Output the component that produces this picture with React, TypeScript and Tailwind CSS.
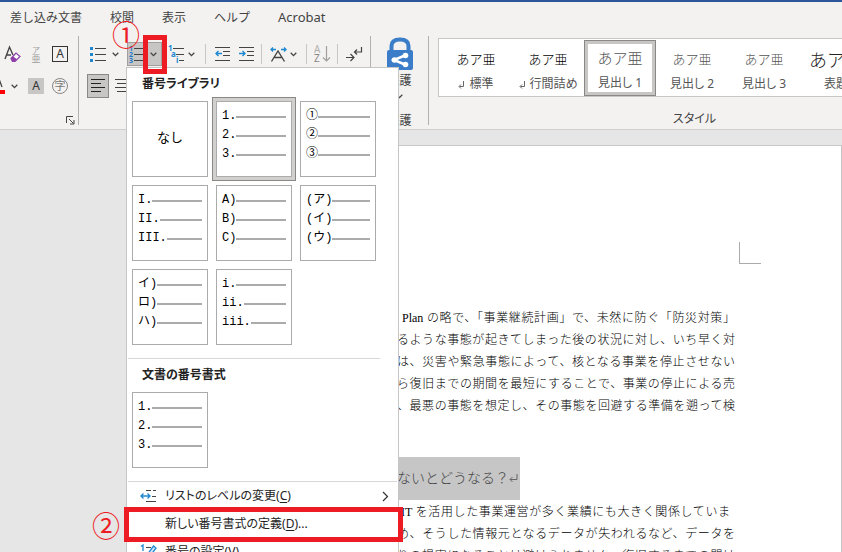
import type { ReactNode } from "react";

const UI = "font-['Noto_Sans','Noto_Sans_CJK_JP',sans-serif] [font-feature-settings:'palt']";
const DOC = "font-['Liberation_Serif','Noto_Sans_CJK_JP',serif] font-light [font-feature-settings:normal]";

const tabs = ["差し込み文書", "校閲", "表示", "ヘルプ"];

function Chevron() {
  return (
    <svg width="7" height="5" viewBox="0 0 7 5" fill="none" stroke="#444" strokeWidth="1.3" aria-hidden="true">
      <path d="M0.7 0.8 3.5 3.6 6.3 0.8" />
    </svg>
  );
}

function Tool({ label, className = "", children }: { label: string; className?: string; children: ReactNode }) {
  return (
    <button type="button" aria-label={label} className={`flex h-6 shrink-0 items-center justify-center ${className}`}>
      {children}
    </button>
  );
}

function Separator() {
  return <span className="h-5 w-px shrink-0 bg-[#c8c6c4]" />;
}

function GroupDivider() {
  return <span className="mt-[1px] h-[89px] w-px shrink-0 bg-[#b3b0ad]" />;
}

function FontGroup() {
  return (
    <section className="flex w-[78px] shrink-0 flex-col" aria-label="フォント">
      <div className="mt-[7px] flex h-6 items-center">
        <Tool label="書式のクリア" className="w-6">
          <svg width="17" height="18" viewBox="0 0 17 18" fill="none" aria-hidden="true">
            <path d="M1 14 5.500 2 9 10M2.500 10H7" stroke="#444" strokeWidth="1.4" />
            <path d="M7 13.500 12 8 16 11.500 11 16.500 8.500 16.500Z" stroke="#8e3fa8" strokeWidth="1.2" fill="#fff" />
            <path d="M7 13.500 9 11.300 13.200 14.500 11 16.500 8.500 16.500Z" fill="#8e3fa8" />
          </svg>
        </Tool>
        <Tool label="ルビ" className="w-6">
          <span className="flex flex-col items-center text-[#a19f9d]">
            <span className="text-[8px] leading-[9px]">ア</span>
            <span className="text-[9px] leading-[9px]">亜</span>
          </span>
        </Tool>
        <Tool label="囲み線" className="w-6">
          <span className="size-4 border border-[#333] text-center text-xs leading-[14px] text-[#333]">A</span>
        </Tool>
      </div>
      <div className="mt-2 flex h-6 items-center">
        <Tool label="フォントの色" className="w-[5px]">
          <svg width="5" height="16" viewBox="0 0 5 16" aria-hidden="true">
            <path d="M-4 10 -1 1 2 9" stroke="#444" strokeWidth="1.3" fill="none" />
            <rect y="12" width="5" height="4" fill="#f00" />
          </svg>
        </Tool>
        <Tool label="フォントの色のオプション" className="w-[19px]">
          <Chevron />
        </Tool>
        <Tool label="文字の網かけ" className="w-6">
          <span className="size-4 bg-[#c8c6c4] text-center text-xs leading-4 text-[#333]">A</span>
        </Tool>
        <Tool label="囲い文字" className="w-6">
          <span className="size-4 rounded-full border border-[#8a8886] text-center text-[11px] leading-[14px] text-[#797775]">
            字
          </span>
        </Tool>
      </div>
      <Tool label="フォントの設定" className="mt-[10px] ml-auto w-4">
        <svg width="9" height="9" viewBox="0 0 9 9" fill="none" stroke="#444" aria-hidden="true">
          <path d="M.5 7V.5H7M3 3 7.5 7.5M8 4V8H4" />
        </svg>
      </Tool>
    </section>
  );
}

function ParagraphGroup() {
  return (
    <section className="flex w-[291px] shrink-0 flex-col pl-2" aria-label="段落">
      <div className="mt-[7px] flex h-6 items-center">
        <Tool label="箇条書き" className="w-[22px]">
          <svg width="16" height="16" viewBox="0 0 16 16" aria-hidden="true">
            <path d="M0 1h3v3H0zM0 7h3v3H0zM0 13h3v3H0z" fill="#1e88d0" />
            <path d="M5 2.500h11M5 8.500h11M5 14.500h11" stroke="#444" />
          </svg>
        </Tool>
        <Tool label="箇条書きのオプション" className="w-[13px]">
          <Chevron />
        </Tool>
        <Tool label="段落番号" className="ml-[5px] w-[18px] border border-r-0 border-[#a19f9d] bg-[#c8c6c4]">
          <svg width="15" height="18" viewBox="0 0 15 18" aria-hidden="true">
            <path d="M5 3.500h10M5 9.500h10M5 15.500h10" stroke="#444" />
            <g fill="#1e78c8" fontSize="7" fontWeight="700" fontFamily="Noto Sans">
              <text x="0" y="6">1</text>
              <text x="0" y="12">2</text>
              <text x="0" y="18">3</text>
            </g>
          </svg>
        </Tool>
        <Tool label="段落番号のオプション" className="w-[17px] border border-l-0 border-[#a19f9d] bg-[#c8c6c4]">
          <Chevron />
        </Tool>
        <Tool label="アウトライン" className="ml-[3px] w-[21px]">
          <svg width="16" height="18" viewBox="0 0 16 18" aria-hidden="true">
            <path d="M5 3.500h11M8 9.500h8M11 15.500h5" stroke="#444" />
            <g fill="#1e88d0" fontSize="8" fontWeight="700" fontFamily="Noto Sans">
              <text x="0" y="6">1</text>
              <text x="3" y="12">a</text>
              <text x="8" y="18">i</text>
            </g>
          </svg>
        </Tool>
        <Tool label="アウトラインのオプション" className="mr-2 w-[11px]">
          <Chevron />
        </Tool>
        <Separator />
        <Tool label="インデントを減らす" className="ml-1 w-6">
          <svg width="15" height="14" viewBox="0 0 15 14" fill="none" aria-hidden="true">
            <path d="M0 .5h15M8 4.500h7M8 8.500h7M0 13.500h15" stroke="#444" />
            <path d="M7 6.500H1M3.500 4 1 6.500 3.500 9" stroke="#1e88d0" strokeWidth="1.4" />
          </svg>
        </Tool>
        <Tool label="インデントを増やす" className="mr-[3px] w-6">
          <svg width="15" height="14" viewBox="0 0 15 14" fill="none" aria-hidden="true">
            <path d="M0 .5h15M8 4.500h7M8 8.500h7M0 13.500h15" stroke="#444" />
            <path d="M0 6.500H6M3.500 4 6 6.500 3.500 9" stroke="#1e88d0" strokeWidth="1.4" />
          </svg>
        </Tool>
        <Separator />
        <Tool label="拡張書式" className="ml-[5px] w-[22px]">
          <svg width="17" height="15" viewBox="0 0 17 15" fill="none" aria-hidden="true">
            <path d="M1.500 14.500 8 4 14.500 14.500M4.500 10.500h7" stroke="#444" strokeWidth="1.4" />
            <path d="M6 2.500H1M3 .5 1 2.500 3 4.500M11 2.500H16M14 .5 16 2.500 14 4.500" stroke="#1e88d0" strokeWidth="1.3" />
          </svg>
        </Tool>
        <Tool label="拡張書式のオプション" className="mr-2 w-[9px]">
          <Chevron />
        </Tool>
        <Separator />
        <Tool label="並べ替え" className="ml-[5px] w-5">
          <svg width="17" height="18" viewBox="0 0 17 18" fill="none" aria-hidden="true">
            <g fontSize="10" fontFamily="Noto Sans">
              <text x="0" y="8" fill="#b3b0ad">A</text>
              <text x="0" y="17" fill="#8a8886">Z</text>
            </g>
            <path d="M12.500 1V16M9 12.500 12.500 16 16 12.500" stroke="#a19f9d" strokeWidth="1.2" />
          </svg>
        </Tool>
        <span className="w-[5px]" />
        <Separator />
        <Tool label="編集記号の表示" className="ml-1 w-6">
          <svg width="17" height="16" viewBox="0 0 17 16" fill="none" stroke="#444" strokeWidth="1.2" aria-hidden="true">
            <path d="M15.500 1V6H8.500M11 3.500 8.500 6 11 8.500M0 11.500H7.500M4.500 8 8 11.500 4.500 15" />
          </svg>
        </Tool>
      </div>
      <div className="mt-2 flex h-6 items-center">
        <Tool label="左揃え" className="w-[22px] border border-[#8a8886] bg-[#c8c6c4]">
          <svg width="15" height="14" viewBox="0 0 15 14" stroke="#222" aria-hidden="true">
            <path d="M0 .5h14M0 4.500h10M0 8.500h14M0 12.500h10" />
          </svg>
        </Tool>
        <Tool label="中央揃え" className="ml-[2px] w-[22px]">
          <svg width="15" height="14" viewBox="0 0 15 14" stroke="#444" aria-hidden="true">
            <path d="M0 .5h15M2 4.500h10M0 8.500h15M2 12.500h10" />
          </svg>
        </Tool>
      </div>
    </section>
  );
}

function ProtectGroup() {
  return (
    <section className="flex w-[57px] shrink-0 flex-col items-center text-xs text-[#444]" aria-label="保護">
      <button type="button" className="mt-[2px] flex flex-col items-center">
        <svg width="28" height="33" viewBox="0 0 28 33" fill="none" aria-hidden="true">
          <path d="M5.500 15V9Q5.500 2.500 14 2.500T22.500 9V15" stroke="#3b7dc8" strokeWidth="4" />
          <rect x="1" y="13" width="26" height="20" rx="2" fill="#3b7dc8" />
          <path d="M20 18 8 23 20 28" stroke="#fff" strokeWidth="2.500" />
          <circle cx="19.500" cy="18.500" r="2.800" fill="#fff" />
          <circle cx="8.500" cy="23" r="2.800" fill="#fff" />
          <circle cx="19.500" cy="27.500" r="2.800" fill="#fff" />
        </svg>
        <span className="mt-px leading-5">保護</span>
        <span className="flex h-[10px] items-center">
          <Chevron />
        </span>
      </button>
      <span className="mt-[10px] leading-5">保護</span>
    </section>
  );
}

const styleItems = [
  { name: "標準", mark: true, sample: "text-[13px] text-black" },
  { name: "行間詰め", mark: true, sample: "text-[13px] text-black" },
  { name: "見出し 1", mark: false, sample: "text-[15px] text-[#555]", selected: true },
  { name: "見出し 2", mark: false, sample: "text-[13px] text-[#555]" },
  { name: "見出し 3", mark: false, sample: "text-[13px] text-[#555]" },
  { name: "表題", mark: false, sample: "text-[18px] text-[#222]" },
];

function StylesGroup() {
  return (
    <section className="flex w-[522px] shrink-0 flex-col pl-[9px]" aria-label="スタイル">
      <div className="mt-[3px] flex h-[60px] items-center border border-[#c8c6c4] bg-white px-px">
        {styleItems.map((s) => (
          <button
            key={s.name}
            type="button"
            className={`flex h-14 w-[72px] shrink-0 flex-col items-center justify-end whitespace-nowrap ${
              s.selected ? "border border-[#8a8886] bg-white ring-3 ring-[#c8c6c4] ring-inset" : ""
            }`}
          >
            <span
              className={`font-['Noto_Sans_CJK_JP',sans-serif] leading-[26px] font-light [font-feature-settings:normal] ${s.sample}`}
            >
              あア亜
            </span>
            <span className={`flex gap-1 text-xs leading-6 text-[#555] ${UI}`}>
              {s.mark && (
                <svg className="mt-2" width="7" height="9" viewBox="0 0 7 9" fill="none" stroke="#666" aria-hidden="true">
                  <path d="M5.500 1V6.500H1.500M3 4.500 1 6.500 3 8.500" />
                </svg>
              )}
              {s.name}
            </span>
          </button>
        ))}
      </div>
      <span className="mt-3 text-center text-xs leading-5 text-[#444]">スタイル</span>
    </section>
  );
}

const library = [
  null,
  ["1.", "2.", "3."],
  ["①", "②", "③"],
  ["I.", "II.", "III."],
  ["A)", "B)", "C)"],
  ["(ア)", "(イ)", "(ウ)"],
  ["イ)", "ロ)", "ハ)"],
  ["i.", "ii.", "iii."],
];

function FormatCell({ labels, selected = false }: { labels: string[] | null; selected?: boolean }) {
  return (
    <button
      type="button"
      className={`size-[84px] border p-[3px] ${selected ? "border-[#8a8886] bg-[#d2d0ce]" : "border-transparent"}`}
    >
      <span className="flex size-full flex-col border border-[#ababab] bg-white px-[5px] pt-[5px] font-['Liberation_Mono','Noto_Sans_CJK_JP',monospace] text-xs leading-[19px] text-black [font-feature-settings:normal]">
        {labels ? (
          labels.map((l) => (
            <span key={l} className="flex items-center whitespace-nowrap">
              {l}
              <span className="h-[2px] flex-1 bg-[#ababab]" />
            </span>
          ))
        ) : (
          <span className="mt-[22px] text-center text-[13px]">なし</span>
        )}
      </span>
    </button>
  );
}

function MenuItem({ icon, label, mnemonic, suffix = "", arrow = false }: {
  icon?: ReactNode;
  label: string;
  mnemonic: string;
  suffix?: string;
  arrow?: boolean;
}) {
  return (
    <button type="button" className="flex h-7 w-full items-center pr-2 pl-3 text-left text-xs text-[#222]">
      <span className="w-[25px] shrink-0">{icon}</span>
      <span className="whitespace-nowrap">
        {label}(<u className="underline-offset-2">{mnemonic}</u>){suffix}
      </span>
      {arrow && (
        <svg className="ml-auto" width="7" height="11" viewBox="0 0 7 11" fill="none" stroke="#333" strokeWidth="1.2" aria-hidden="true">
          <path d="M1 1 5.500 5.500 1 10" />
        </svg>
      )}
    </button>
  );
}

function NumberingMenu() {
  return (
    <div className="absolute top-[67px] left-[126px] w-[273px] border border-[#c6c6c6] bg-white px-px">
      <h2 className="h-[29px] pl-[14px] text-xs leading-[31px] font-bold text-[#222]">番号ライブラリ</h2>
      <div className="grid w-[252px] grid-cols-3">
        {library.map((labels, i) => (
          <FormatCell key={i} labels={labels} selected={i === 1} />
        ))}
      </div>
      <hr className="mt-[9px] w-[252px] border-[#d8d8d8]" />
      <h2 className="h-[29px] pl-[14px] text-xs leading-[31px] font-bold text-[#222]">文書の番号書式</h2>
      <FormatCell labels={["1.", "2.", "3."]} />
      <hr className="mt-[9px] border-[#d8d8d8]" />
      <MenuItem
        label="リストのレベルの変更"
        mnemonic="C"
        arrow
        icon={
          <svg width="17" height="14" viewBox="0 0 17 14" fill="none" aria-hidden="true">
            <path d="M6 1.500h5M13 1.500h3M12 7.500h4M6 12.500h10" stroke="#444" />
            <path d="M1 7H10M3.500 4.500 1 7 3.500 9.500M7.500 4.500 10 7 7.500 9.500" stroke="#1e88d0" strokeWidth="1.3" />
          </svg>
        }
      />
      <MenuItem label="新しい番号書式の定義" mnemonic="D" suffix="..." />
      <MenuItem
        label="番号の設定"
        mnemonic="V"
        suffix="..."
        icon={
          <svg width="17" height="16" viewBox="0 0 17 16" fill="none" aria-hidden="true">
            <path d="M1 2.500 3 1V7" stroke="#1e88d0" strokeWidth="1.300" />
            <path d="M6 3.500h5M1 14.500h5" stroke="#444" />
            <path d="M7 11 13.500 2 16 4 9.500 13 6.500 14Z" stroke="#1e88d0" strokeWidth="1.300" fill="#cfe6f7" />
          </svg>
        }
      />
    </div>
  );
}

function Line({ className = "", children }: { className?: string; children: ReactNode }) {
  return <span className={`block text-justify whitespace-nowrap [text-align-last:justify] ${className}`}>{children}</span>;
}

function DocumentPage() {
  return (
    <main className="flex-1 overflow-hidden bg-[#e6e6e6] pt-[15px] pl-[160px]">
      <article className={`flex h-full flex-col border border-b-0 border-[#c6c6c6] bg-white pr-[106px] text-xs text-black ${DOC}`}>
        <span className="mt-24 -mr-[26px] size-[22px] shrink-0 self-end border-b border-l border-[#ababab]" />
        <p className="mt-[43px] w-[338px] self-end leading-[22px]">
          <Line className="pl-[5px]">Plan の略で、「事業継続計画」で、未然に防ぐ「防災対策」</Line>
          <Line>るような事態が起きてしまった後の状況に対し、いち早く対</Line>
          <Line>は、災害や緊急事態によって、核となる事業を停止させない</Line>
          <Line>ら復旧までの期間を最短にすることで、事業の停止による売</Line>
          <Line>、最悪の事態を想定し、その事態を回避する準備を遡って検</Line>
        </p>
        <div className="mt-10 w-[338px] self-end">
          <h1 className="flex h-[43px] w-[123px] items-center bg-[#c6c6c6] text-sm font-light whitespace-nowrap text-[#444]">
            ないとどうなる？
            <svg className="shrink-0" width="9" height="9" viewBox="0 0 9 9" fill="none" stroke="#666" aria-hidden="true">
              <path d="M8 0V5.500H1M3.500 3 1 5.500 3.500 8" />
            </svg>
          </h1>
        </div>
        <p className="mt-px w-[338px] self-end leading-[22px]">
          <Line className="pr-[5px] pl-1">IT を活用した事業運営が多く業績にも大きく関係していま</Line>
          <Line>め、そうした情報元となるデータが失われるなど、データを</Line>
          <Line>りの損害になることは避けられません。復旧するまでの間は</Line>
        </p>
      </article>
    </main>
  );
}

export default function App() {
  return (
    <div className={`relative flex h-screen flex-col overflow-hidden bg-[#f3f2f1] ${UI}`}>
      <nav className="flex h-[35px] shrink-0 items-center gap-7 border-t-2 border-[#2b579a] pb-[2px] pl-[10px] text-xs whitespace-nowrap text-[#444] [font-feature-settings:normal]">
        {tabs.map((t) => (
          <button key={t} type="button">
            {t}
          </button>
        ))}
        <button type="button" className="text-[13px]">
          Acrobat
        </button>
      </nav>
      <div className="flex h-[95px] shrink-0 overflow-hidden border-b border-[#d2d0ce]">
        <FontGroup />
        <GroupDivider />
        <ParagraphGroup />
        <GroupDivider />
        <ProtectGroup />
        <GroupDivider />
        <StylesGroup />
      </div>
      <DocumentPage />
      <NumberingMenu />
      <span className="absolute top-[35px] left-[143px] h-[39px] w-6 border-5 border-[#ed1c24]" />
      <span className="absolute top-[20px] left-[112px] text-[28px] leading-[30px] text-[#ed1c24]">①</span>
      <span className="absolute top-[507px] left-[124px] h-[35px] w-[279px] border-5 border-[#ed1c24]" />
      <span className="absolute top-[511px] left-[92px] text-[28px] leading-[30px] text-[#ed1c24]">②</span>
    </div>
  );
}
